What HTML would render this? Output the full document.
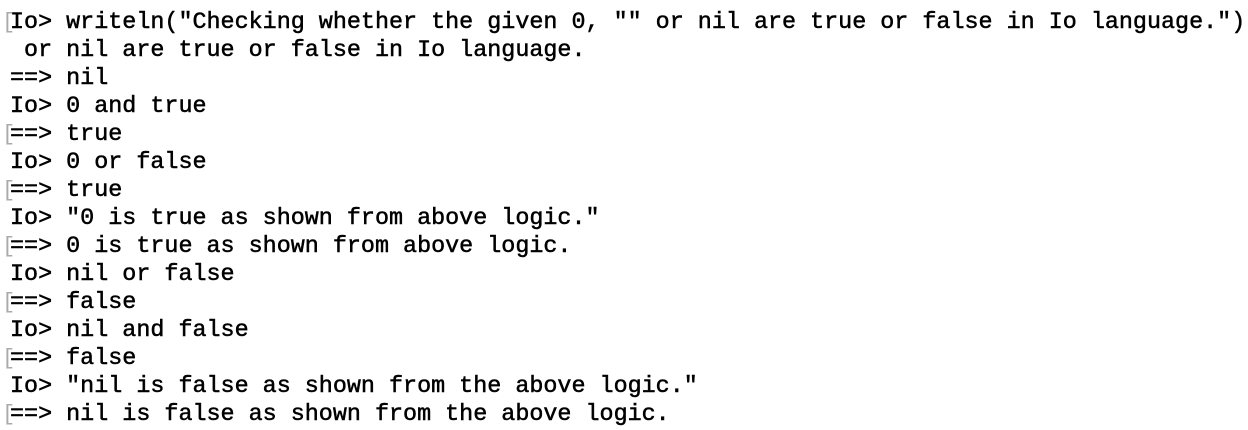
<!DOCTYPE html><html><head><style>
body{margin:0;background:#fff;width:1248px;height:430px;overflow:hidden}
pre{margin:0;position:absolute;left:10px;top:9px;font-family:"Liberation Mono",monospace;font-size:23.4px;line-height:28px;color:#000;-webkit-text-stroke:0.5px #000}
.b{position:absolute;left:-8px;color:#aaa;font-size:22px;-webkit-text-stroke:0}
</style></head><body><pre><span class="b">[</span>Io&gt; writeln("Checking whether the given 0, "" or nil are true or false in Io language.")
 or nil are true or false in Io language.
==&gt; nil
Io&gt; 0 and true
<span class="b">[</span>==&gt; true
Io&gt; 0 or false
<span class="b">[</span>==&gt; true
Io&gt; "0 is true as shown from above logic."
<span class="b">[</span>==&gt; 0 is true as shown from above logic.
Io&gt; nil or false
<span class="b">[</span>==&gt; false
Io&gt; nil and false
<span class="b">[</span>==&gt; false
Io&gt; "nil is false as shown from the above logic."
<span class="b">[</span>==&gt; nil is false as shown from the above logic.</pre></body></html>
